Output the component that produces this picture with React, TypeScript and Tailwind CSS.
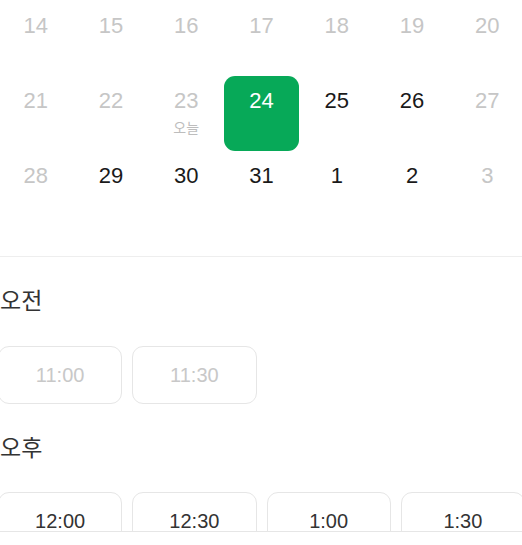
import React from 'react';

type Day = { n: number; state: 'off' | 'on' | 'sel'; today?: boolean };

const weeks: Day[][] = [
  [14, 15, 16, 17, 18, 19, 20].map(n => ({ n, state: 'off' as const })),
  [
    { n: 21, state: 'off' },
    { n: 22, state: 'off' },
    { n: 23, state: 'off', today: true },
    { n: 24, state: 'sel' },
    { n: 25, state: 'on' },
    { n: 26, state: 'on' },
    { n: 27, state: 'off' },
  ],
  [
    { n: 28, state: 'off' },
    { n: 29, state: 'on' },
    { n: 30, state: 'on' },
    { n: 31, state: 'on' },
    { n: 1, state: 'on' },
    { n: 2, state: 'on' },
    { n: 3, state: 'off' },
  ],
];

const am = ['11:00', '11:30'];
const pm = ['12:00', '12:30', '1:00', '1:30'];

function TimeButton({ label, disabled }: { label: string; disabled?: boolean }) {
  return (
    <button
      className={`h-[58px] rounded-[11px] border border-[#e6e6e6] bg-white text-[20px] leading-[24px] ${
        disabled ? 'text-[#c8c8c8]' : 'text-[#333]'
      }`}
    >
      {label}
    </button>
  );
}

export default function App() {
  return (
    <div
      className="relative w-[522px] h-[545px] overflow-hidden bg-white"
      style={{ fontFamily: '"Liberation Sans", "Noto Sans CJK KR", sans-serif' }}
    >
      <div className="-ml-[2px] w-[527px] pt-[1px]">
        {/* calendar */}
        <div className="pb-[30px]">
          {weeks.map((week, i) => (
            <div key={i} className="grid grid-cols-7">
              {week.map(d => (
                <div
                  key={d.n}
                  className={`h-[75px] flex flex-col items-center pt-[13px] ${
                    d.state === 'sel' ? 'bg-[#07a958] rounded-[11px]' : ''
                  }`}
                >
                  <span
                    className={`text-[22px] leading-[24px] ${
                      d.state === 'sel' ? 'text-white' : d.state === 'on' ? 'text-[#1a1a1a]' : 'text-[#c6c6c6]'
                    }`}
                  >
                    {d.n}
                  </span>
                  {d.today && <span className="mt-[6px] text-[14px] leading-[18px] text-[#bdbdbd]">오늘</span>}
                </div>
              ))}
            </div>
          ))}
        </div>
      </div>

      <div className="border-t border-[#eeeeee]" />

      <div className="-ml-[2px] w-[527px]">
        <p className="pt-[28px] pl-[2px] text-[23px] leading-[32px] text-[#333]">오전</p>
        <div className="mt-[29px] grid grid-cols-4 gap-[10px]">
          {am.map(t => (
            <TimeButton key={t} label={t} disabled />
          ))}
        </div>

        <p className="pt-[28px] pl-[2px] text-[23px] leading-[32px] text-[#333]">오후</p>
        <div className="mt-[28px] grid grid-cols-4 gap-[10px]">
          {pm.map(t => (
            <TimeButton key={t} label={t} />
          ))}
        </div>
      </div>

      {/* bottom bar overlay */}
      <div className="absolute left-0 right-0 bottom-0 h-[14px] bg-white border-t border-[#e6e6e6]" />
    </div>
  );
}
